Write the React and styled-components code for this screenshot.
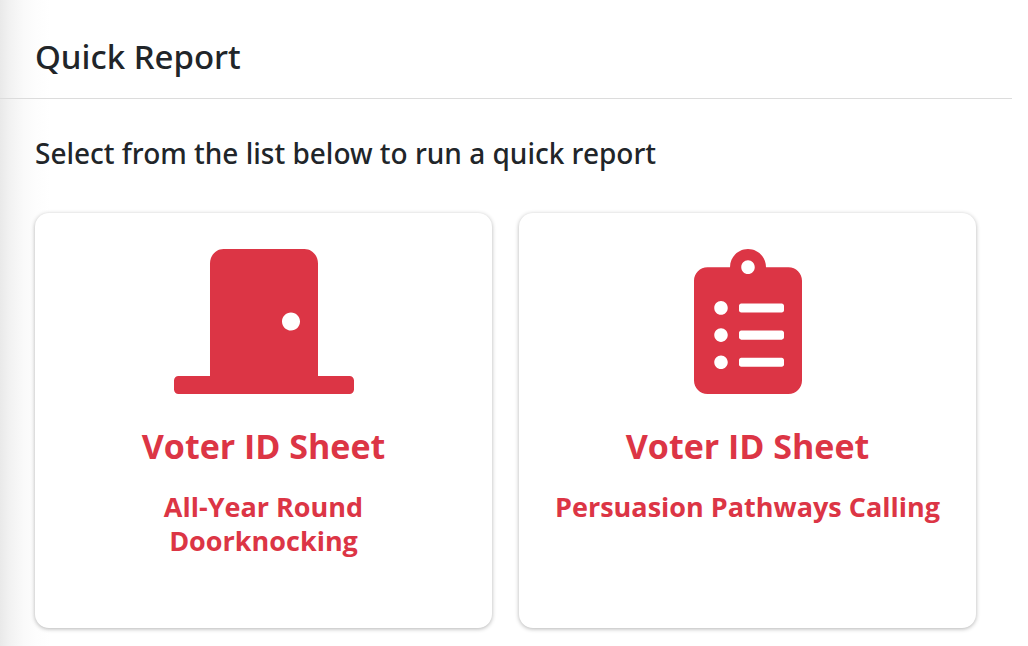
import styled, { createGlobalStyle } from "styled-components";
import { FaDoorClosed, FaClipboardList } from "react-icons/fa";

const reports = [
  {
    id: "doorknocking",
    icon: FaDoorClosed,
    iconWidth: 180,
    title: "Voter ID Sheet",
    text: "All-Year Round Doorknocking",
  },
  {
    id: "calling",
    icon: FaClipboardList,
    iconWidth: 108,
    title: "Voter ID Sheet",
    text: "Persuasion Pathways Calling",
  },
];

const ReportCard = ({ icon: Icon, iconWidth, title, text }) => (
  <Card href="#">
    <IconWrapper $width={iconWidth}>
      <Icon aria-hidden="true" preserveAspectRatio="none" />
    </IconWrapper>
    <CardTitle>{title}</CardTitle>
    <CardText>{text}</CardText>
  </Card>
);

const App = () => (
  <Page>
    <GlobalStyle />
    <Header>
      <Title>Quick Report</Title>
    </Header>
    <Content>
      <Lead>Select from the list below to run a quick report</Lead>
      <Grid>
        {reports.map(({ id, ...report }) => (
          <ReportCard key={id} {...report} />
        ))}
      </Grid>
    </Content>
  </Page>
);

/**
 * styles
 */
const GlobalStyle = createGlobalStyle`
  * {
    box-sizing: border-box;
  }

  body {
    margin: 0;
    background: #fff;
    color: #212529;
    font-family: "Segoe UI", "Noto Sans", "Open Sans", sans-serif;
  }
`;

const Page = styled.main`
  min-height: 100vh;
  padding-right: 16px;
  background: linear-gradient(
    90deg,
    #e9e9e9,
    #f2f2f2 10px,
    #fafafa 24px,
    #fdfdfd 36px,
    #fff 50px
  );
`;

const Header = styled.header`
  padding: 35px 36px 20px 35px;
  border-bottom: 1px solid #dcdcdc;
`;

const Title = styled.h1`
  margin: 0;
  font-size: 33px;
  line-height: 43px;
  font-weight: 500;
`;

const Content = styled.section`
  padding: 37px 36px 18px 35px;
`;

const Lead = styled.h2`
  margin: 0 0 42px;
  font-size: 28px;
  line-height: 35px;
  font-weight: 500;
`;

const Grid = styled.div`
  display: grid;
  grid-template-columns: 1fr 1fr;
  gap: 27px;
`;

const Card = styled.a`
  display: flex;
  flex-direction: column;
  align-items: center;
  min-height: 415px;
  padding: 36px;
  border-radius: 14px;
  background: #fff;
  box-shadow: 0 1px 4px rgba(0, 0, 0, 0.3);
  color: #dc3545;
  font-family: "Segoe UI", "Open Sans", "Noto Sans", sans-serif;
  text-align: center;
  text-decoration: none;
`;

const IconWrapper = styled.span`
  display: flex;

  svg {
    width: ${({ $width }) => $width}px;
    height: 145px;
  }
`;

const CardTitle = styled.h3`
  margin: 31px 0 22px;
  font-size: 34px;
  line-height: 43px;
  font-weight: 700;
`;

const CardText = styled.p`
  margin: 0;
  font-size: 27px;
  line-height: 34px;
  font-weight: 700;
`;

export default App;
